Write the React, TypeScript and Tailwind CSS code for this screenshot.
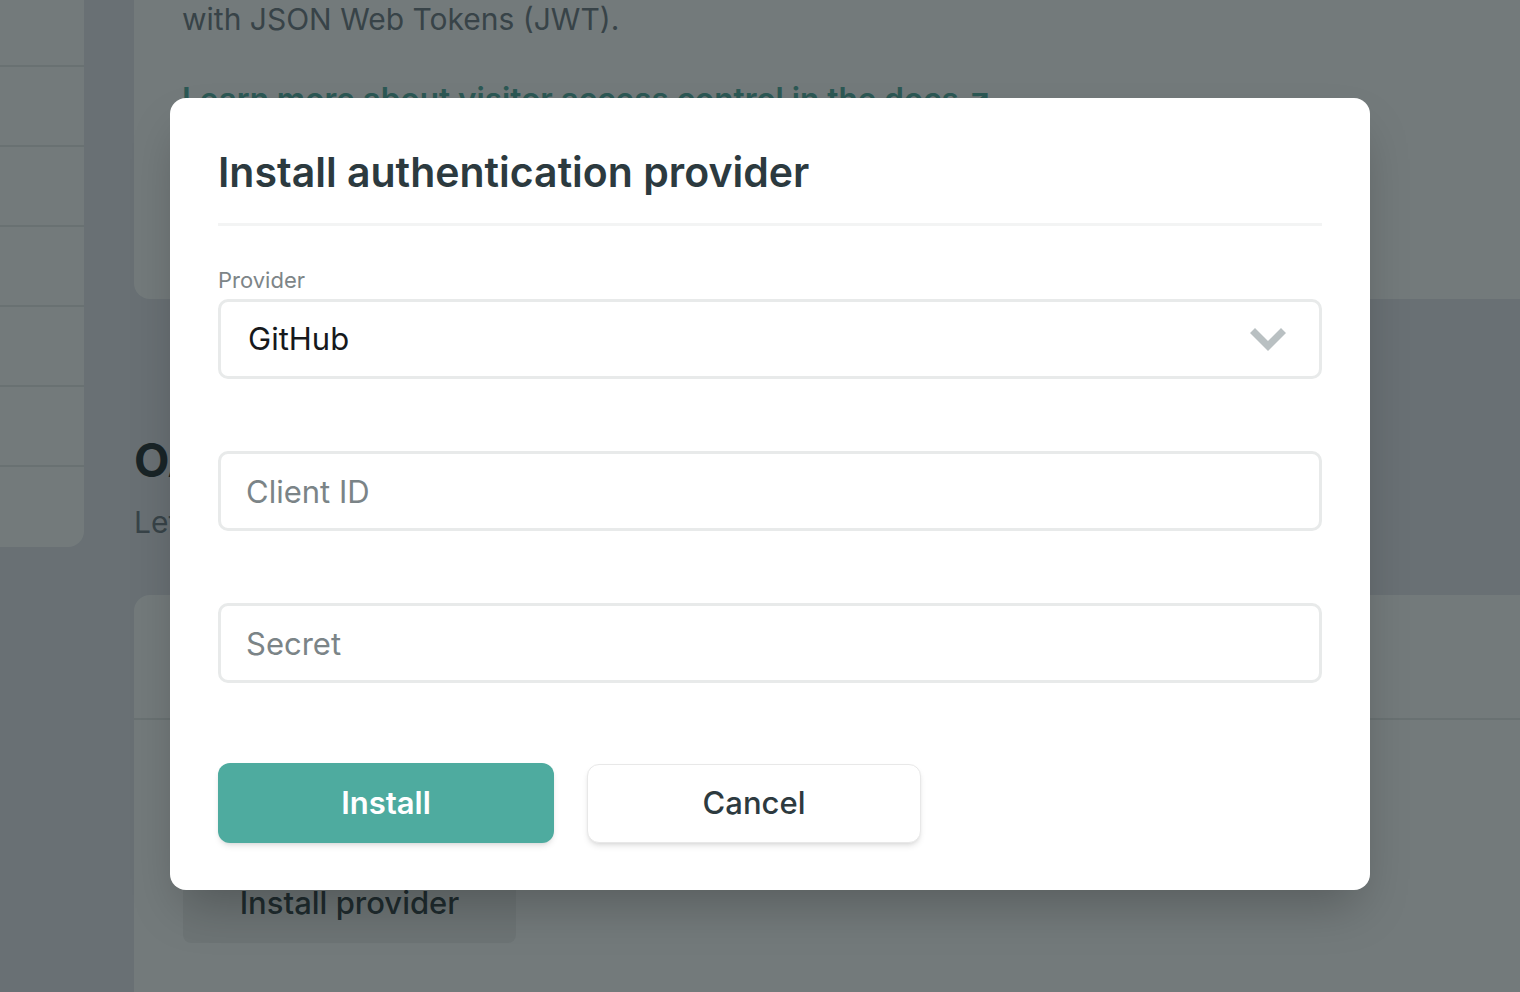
import React from "react";

function Chevron() {
  return (
    <svg width="36" height="23" viewBox="0 0 36 23" className="shrink-0">
      <path d="M0 5 L5 0 L18 13 L31 0 L36 5 L18 23 Z" fill="#b9c0c2" />
    </svg>
  );
}

function Field({ placeholder }: { placeholder: string }) {
  return (
    <input
      placeholder={placeholder}
      className="w-full h-[80px] rounded-[10px] border-[3px] border-[#e8eaea] bg-white px-[25px] text-[31px] text-[#16191c] placeholder:text-[#7b8487] outline-none"
    />
  );
}

export default function App() {
  const rows = [0, 1, 2, 3, 4, 5, 6];

  return (
    <div
      className="relative h-screen w-full overflow-hidden bg-[#e5e7ee]"
      style={{ fontFamily: "Inter, 'Noto Sans', sans-serif" }}
    >
      {/* page behind the dialog */}
      <div className="flex items-start">
        <div className="w-[84px] shrink-0 -mt-[13px] bg-white rounded-br-2xl">
          {rows.map((r) => (
            <div
              key={r}
              className={
                r < rows.length - 1
                  ? "h-[80px] border-b-2 border-[#e6e8e8]"
                  : "h-[80px]"
              }
            />
          ))}
        </div>

        <div className="ml-[50px] w-[1420px] shrink-0">
          {/* card scrolled past its top: only the end of its text shows */}
          <div className="-mt-[3px] bg-white rounded-bl-2xl pl-12 pb-[178px]">
            <p className="text-[30px] leading-[44px] text-[#6b7780]">
              with JSON Web Tokens (JWT).
            </p>
            <p className="mt-[36px] text-[31.5px] leading-[44px] font-semibold text-[#4eaa9e]">
              Learn more about visitor access control in the docs ↗
            </p>
          </div>

          <h2 className="mt-[133px] text-[46px] leading-[56px] font-bold text-[#1f2a2e]">
            OAuth providers
          </h2>
          <p className="mt-3 text-[30px] leading-[44px] text-[#6b7780]">
            Let visitors log in with an external identity provider.
          </p>

          <div className="mt-[51px] bg-white rounded-2xl h-[600px]">
            <div className="h-[125px] border-b-2 border-[#e6e8e8]" />
            <div className="pl-[49px] pt-[143px]">
              <button className="w-[333px] h-[80px] rounded-lg bg-[#f0f1f1] text-[31px] font-medium text-[#2d3a3f]">
                Install provider
              </button>
            </div>
          </div>
        </div>
      </div>

      {/* dialog */}
      <div className="absolute inset-0 bg-[#162123]/60 flex items-center justify-center pl-5 pb-1">
        <div className="w-[1200px] bg-white rounded-2xl px-12 pt-12 pb-[47px] shadow-2xl">
          <div className="pb-[25px] border-b-[3px] border-[#f3f4f4]">
            <h1 className="text-[41px] leading-[52px] font-semibold text-[#2c3a3f]">
              Install authentication provider
            </h1>
          </div>

          <label className="block mt-[38px] mb-[2px] text-[22px] leading-[33px] text-[#7d8588]">
            Provider
          </label>
          <div className="h-[80px] rounded-[10px] border-[3px] border-[#e8eaea] flex items-center justify-between pl-[27px] pr-[33px]">
            <span className="text-[31px] text-[#16191c]">GitHub</span>
            <Chevron />
          </div>

          <div className="mt-[72px]">
            <Field placeholder="Client ID" />
          </div>
          <div className="mt-[72px]">
            <Field placeholder="Secret" />
          </div>

          <div className="mt-[80px] flex items-center gap-[33px]">
            <button className="w-[336px] h-[80px] rounded-xl bg-[#4eab9f] text-[31px] font-semibold text-white shadow-md">
              Install
            </button>
            <button className="w-[334px] h-[79px] rounded-xl bg-white border border-[#e8e8e8] text-[31px] font-medium text-[#2d3a3f] shadow-md">
              Cancel
            </button>
          </div>
        </div>
      </div>
    </div>
  );
}
